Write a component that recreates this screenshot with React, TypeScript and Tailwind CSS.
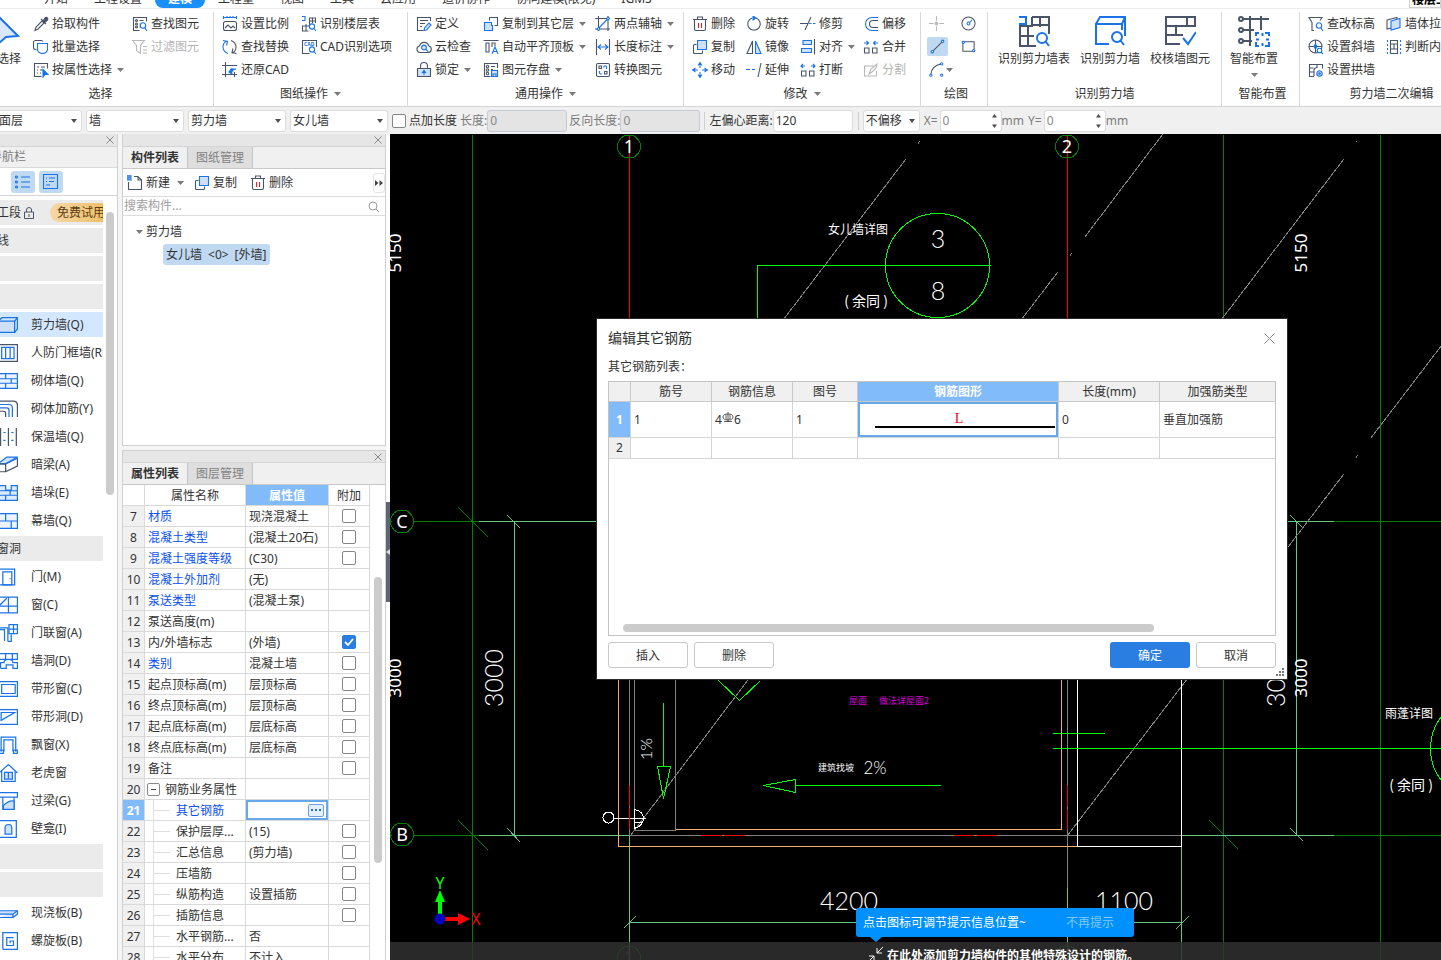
import { useState } from "react";
import type { ReactNode } from "react";

const INK = "#4a5468";
const BLUE = "#1a73e8";
const SOFT = "#cfe1fa";
const RED = "#e02020";
const FADED = "#b8b8b8";

// [path, stroke, fill]
type Stroke = [string, string?, string?];

const dot = (x: number, y: number, r: number) =>
  `M${x - r} ${y}a${r} ${r} 0 1 0 ${2 * r} 0a${r} ${r} 0 1 0 ${-2 * r} 0`;
const box = (x: number, y: number, w: number, h: number) => `M${x} ${y}h${w}v${h}h${-w}z`;

const icons: Record<string, Stroke[]> = {
  picker: [["M2 14.5l1-3.5 6-6 2 2-6 6z"], ["M8 3l5 5M10 5l2-3a1.5 1.5 0 0 1 2.500 2L11 7z", INK, INK]],
  batch: [["M3.500 10.500h-1a2 2 0 0 1-2-2v-5a2 2 0 0 1 2-2h6a2 2 0 0 1 1.500 1"], ["M4.500 4.500h10v6a4 4 0 0 1-3 3.500q-2 1-4 0a4 4 0 0 1-3-3.500z", BLUE, "#fff"]],
  attr: [["M14.500 6.500v-5h-13v13h7M4 5h2M8 5h4M4 8h1M7 8h3M4 11h1M7 11h1"], ["M10 7.500l5 5h-3l-2 2.500z", BLUE, BLUE]],
  find: [["M14.500 5.500v-4h-13v13h6M7.500 4.500h4M7.500 8h1M7.500 11h1"], [dot(4.5, 4.5, 1)], [dot(4.5, 8, 1)], [dot(4.5, 11, 1)], [dot(11, 9.5, 2.7) + "M13 12l2 3", BLUE]],
  filter: [["M.5 1.500h12l-4 5v8l-4-3v-5zM11 7.500h4M11 11h4M11 14h4", FADED]],
  scale: [["M1.500 7.500a2 2 0 0 1 2-2h9a2 2 0 0 1 2 2v5a2 2 0 0 1-2 2h-9a2 2 0 0 1-2-2zM3 12l3-3 3 3 2-2 2 2"], ["M1 1.500h14M1.500 0v3M5 0v2M8 0v2M11 0v2M14.500 0v3", BLUE]],
  swap: [["M9 1.500q5 2 5 6.500t-4 6M14.500 14.500l-4.500-1 1-4"], ["M6 14.500q-5-2-5-6.500t4-6M1 1.500l4.500 1-1 4", BLUE]],
  restore: [["M3.500 0v15M0 3.500h15M12.500 10v5M0 12.500h15"], ["M7 10l4-1-1-2 4 0M9 7l-2 3 3 2z", BLUE, BLUE]],
  floors: [["M8.500 6v-4h6v5M11.500 2v5M8 5h6.500M8.500 5v5h-7v5h6M5 8v7M1.500 10.500v4"], ["M1 .5h3v4h-3" + dot(11, 10.5, 2.6) + "M13 12.500l2 2.500", BLUE]],
  cad: [["M15.500 8v-6.500h-14v13h7"], [dot(11, 10.5, 2.6) + "M13 12.500l2 2.500", BLUE]],
  define: [["M14.500 5v-3.500h-13v13h6M4 4.500h8M4 7.500h5M4 10.500h2"], ["M8 14.500l.5-2.500 4.500-5 2 2-4.500 5z", BLUE, SOFT]],
  cloud: [["M4 13.500a3.300 3.300 0 0 1-.5-6.500a4.800 4.800 0 0 1 9.300 0a3.300 3.300 0 0 1-.8 6.500z"], [dot(8, 8.5, 2.4) + "M10 10.500l2 2", BLUE, SOFT]],
  lock: [["M4.500 6v-2a3.500 3.500 0 0 1 7 0v2"], [box(1.5, 6.5, 13, 8), INK, SOFT], ["M8 13v-3M6.500 10.500l1.500-2 1.500 2z", BLUE, BLUE]],
  copyTo: [["M6.500 1.500h8v8h-3M6.500 1.500v3"], ["M1.500 6.500h7v3h1v5h-8z", BLUE, SOFT]],
  alignTop: [["M.5 1.500h15M3 4v9h3v-9zM9 8v-4h3v3"], ["M9 15l3-7 3 7M10 12.500h4", BLUE]],
  save: [["M14.500 6v-4.500h-13v13h6M8 4.500h4M8 7.500h2"], [dot(4.5, 4.5, 1.2)], [dot(4.5, 8, 1.2)], [dot(4.5, 11.5, 1.2)], ["M8.500 8.500h6v6h-6zM10 14v-2h3v2", BLUE, SOFT]],
  twoPoint: [["M3.500 0v15M13 0v15M0 2.500h15M0 13h15"], ["M3 13L13 2.500", BLUE], [dot(3.5, 13, 1.2), BLUE, "#fff"], [dot(13, 2.5, 1.2), BLUE, "#fff"]],
  length: [["M1.500 0v16M14.500 0v16"], ["M3 8h10M6 5.500l-3 2.500 3 2.500M10 5.500l3 2.500-3 2.500", BLUE]],
  convert: [["M3 1.500h10q1.500 0 1.500 1.500v10q0 1.500-1.500 1.500H3q-1.500 0-1.500-1.500V3q0-1.500 1.500-1.500z"], [box(4, 4, 2.5, 2.5)], [box(9.5, 9.5, 2.5, 2.5)], ["M8.500 5.500q0-1.500 1.500-1.500h1.500M4.500 9v1.500q0 1.500 1.500 1.500h1M11.500 4v3M4.500 9v2", BLUE]],
  trash: [["M1 3.500h14M5.500 3v-2h5v2M2.500 4v9q0 1.500 1.500 1.500h8q1.500 0 1.500-1.500v-9"], ["M6.500 7v5M9.500 7v5", RED]],
  copy: [["M4.500 5.500h-2q-1 0-1 1v7q0 1 1 1h7q1 0 1-1v-2"], [box(5.5, 1.5, 9, 9), BLUE, SOFT]],
  move: [["M8 4v2M8 10v2M4 8h2M10 8h2", BLUE], ["M8 .5L6.500 3h3zM8 15.500L6.500 13h3zM.5 8L3 6.500v3zM15.500 8L13 6.500v3z", BLUE, BLUE]],
  rotate: [["M10 2a6.300 6.300 0 1 1-4 0"], ["M7 0l3 2-3 2z", BLUE, BLUE]],
  mirror: [["M6.500 2v12.500h-5.500z"], ["M9.500 2v12.500h5.500z", BLUE, SOFT]],
  extend: [["M0 7.500h4M6 7.500h3", BLUE], ["M15 1l-3 14"]],
  trim: [["M0 7.500h8M11 1L5 14"], ["M9 7.500h2.500M13 7.500h2.500", BLUE]],
  align: [["M14.500 0v15.500"], [box(3, 1.5, 8.500, 4), BLUE, SOFT], [box(1.5, 9.5, 10, 4), BLUE, SOFT]],
  breakUp: [[box(1.5, 9, 4.5, 5)], [box(9.5, 9, 4.5, 5)], ["M1 4h4M3 2L1 4l2 2M11 4h4M13 2l2 2-2 2", BLUE]],
  offset: [["M15 11.500h-5a3.500 3.500 0 0 1 0-7h5"], ["M15 14.500h-6a6.500 6.500 0 0 1 0-13h6", BLUE]],
  merge: [[box(1.5, 9, 4.5, 5)], [box(9.5, 9, 4.5, 5)], ["M1 4h4M3.500 2l2 2-2 2M15 4h-4M12.500 2l-2 2 2 2", BLUE]],
  split: [["M11 4h-9.500v10h12v-5M6 12l2-5 6-5-1 4-4 4z", FADED]],
  point: [["M8 0v5M8 11v5M0 8h5M11 8h5" + dot(8, 8, 1.5), FADED, FADED]],
  gauge: [[dot(8, 8, 7)], ["M9 7l3-3" + dot(8, 8, 1.5), BLUE]],
  line: [["M2 14L14 2"], [dot(2.5, 13.5, 1.3) + dot(13.5, 2.5, 1.3), BLUE, "#fff"]],
  rect: [[box(2, 3, 12, 10)], [dot(2.5, 3.5, 1.2) + dot(13.5, 12.5, 1.2), BLUE, "#fff"]],
  arc: [["M2 13q1-9 11-11"], [dot(2, 14, 1.2) + dot(13.5, 2, 1.2) + dot(13.5, 14, 1.2), BLUE, "#fff"]],
  elevation: [["M6 14.500h-2v-8l-3-5h13l-2 3"], [dot(11, 9.5, 2.7) + "M13 12l2 3", BLUE]],
  slant: [[dot(7.5, 7.5, 6.5)], ["M7.500 1v13M1 7.500h13"], ["M7.500 5l1.500 2.500-1.500 2.500-1.500-2.500z", BLUE, BLUE], [dot(11.5, 11.5, 2.3) + "M13 13l2 2", BLUE, "#fff"]],
  arch: [["M6 14.500h-4.500v-12h13v4M6 14v-6q0-2 3-2.500M1.500 6h4M1.500 10h4M9 2v4"], [dot(11.5, 11.5, 2.7) + dot(11.5, 11.5, .8), BLUE, SOFT]],
  stretch: [["M1 4l10-2.500v9L1 13z"], ["M5 5l9-2.500v9L5 14z", BLUE, SOFT]],
  judge: [["M4.500 1v14M11.500 1v14M4.500 1.500h7M4.500 5h7M4.500 10h7M4.500 14.500h7M8 5v5"], ["M1.500 1v2M1.500 5v2M1.500 9v2M1.500 13v2M14.500 1v2M14.500 5v2M14.500 9v2M14.500 13v2", BLUE]],
  create: [["M7 1.500h4l3.500 3.500v9.500h-13V7M11 1.500v3.500h3.500"], ["M0 1h5M0 3h5M0 5h5M1 0v5M3 0v5", BLUE]],
  wall: [[box(-2, 4.5, 15, 10), BLUE, SOFT], ["M-2 4.500l4-3h13.500v10l-2.500 3M13 4.500l2.500-3", BLUE]],
  guard: [[box(-2, .5, 17.5, 15)], ["M1.500 3h11v10h-11zM5 3v10M9 3v10", BLUE]],
  brick: [["M-2 1.500h17.500v13h-17.500M-2 6h17.500M-2 10h17.500M5 1.500v4.500M10 6v4M5 10v4.500", BLUE, "#eaf3ff"]],
  rebar: [["M-1 4h9q3 0 3 3v8M-1 7h7q2 0 2 2v6", BLUE], ["M-1 1h13q3.500 0 3.500 4v10M-1 10h4q2 0 2 2v3"]],
  thermal: [["M.5 0v16M7.500 0v16M14.500 0v16"], ["M3 4h2M3 11h2M10 4h2M10 11h2", BLUE]],
  beam: [["M-2 7L6 1h9.500L5 7z", BLUE, SOFT], ["M-2 7h7v7h-7M5 14l10.500-5V2"], ["M5 7L15.500 2", BLUE]],
  pier: [["M-2 1.500h7v4h5v-4h5.500v13h-17.500M-2 6h17.500M-2 10h17.500M5 10v4.500M9 6v4", BLUE, "#dcebff"]],
  curtain: [["M-2 1.500h17.500v13h-17.500M-2 8h17.500M5 1.500v6.500M10 8v6.500", BLUE, "#eaf3ff"]],
  door: [[box(-1, 1, 14, 14), BLUE], [box(2.5, 3.5, 8, 11.5), BLUE], ["M9 9v1", BLUE]],
  window: [["M-2 1h17.500v14h-17.500M7.500 1v14M-2 9h17.500M0 8l6-6", BLUE]],
  doorWindow: [["M7 15.500v-12h-9M7 15.500h3V9M-2 15.500V5h6v10", BLUE], ["M8 .5h7.500v8h-7.500zM12 .5v8M8 4.500h8", BLUE]],
  hole: [["M-2 1.500h17.500v5h-17.500M5 1.500v5M11 1.500v5M.5 14.500v-5h3q0-3 4-3t4 3h4v5h-4v-3h-6v3h-5", BLUE]],
  strip: [[box(-2, 1.5, 17.5, 13), BLUE], [box(1.5, 4, 12, 8), BLUE]],
  stripHole: [[box(-2, 1.5, 17.5, 13), BLUE], ["M1 4h12L1 11z", BLUE]],
  bay: [["M1 14V1h13V14M3.500 14V3.500h8v10.500M-1 12.500h4v3h-4M12 12.500h3.500v3h-3.500z", BLUE]],
  dormer: [["M-1 8l8.500-7.500 8 7.500M1.500 6v9.500h12V6", BLUE], [box(4, 7.500, 7, 6), BLUE, SOFT], ["M7.500 8v5", BLUE]],
  lintel: [["M-2 .5h17.500v4h-17.500M2.500 4.500v11h10V4.500", BLUE], ["M3 15.500V12q5-5 9.500-4v7.500z", BLUE, SOFT]],
  niche: [["M-1 .5h15.500v15h-15.500", BLUE], ["M4.500 12.500V7q0-3 3-3t3 3v5.500z", BLUE, SOFT]],
  slab: [["M-2 6h17.500l-4 3h-13.500M11.500 9v3h-13.500M15.500 6v3l-4 3", BLUE, SOFT]],
  spiral: [["M2.500 15.500h13V.5h-13v9M2.500 9v6.500M12 5H6v7h6V8H9v2", BLUE]],
  list: [["M6 3h9M6 8h9M6 13h9" + dot(1.5, 3, 1) + dot(1.5, 8, 1) + dot(1.5, 13, 1), BLUE]],
  card: [[box(.5, .5, 14, 14), BLUE], ["M3 4h1M6 4h6M3 7.500h1M6 7.500h5M3 11h4", BLUE]],
};

const bigIcons: Record<string, Stroke[]> = {
  cursor: [["M5 1L25 21 13 22 5 29z", BLUE, "#dbe8fb"]],
  tableScan: [["M14 10h18M14 2h17v17M22 2v10M14 2v9H2v20h16M10 10v21M2 21h14"], ["M1 2h7v7H1" + dot(24, 23, 5) + "M28 27l3 4", BLUE]],
  wallScan: [["M15 29H2V9h26v6M2 9l4-7h25v19M28 9l3-7", BLUE], [dot(23, 22, 5) + "M27 26l3 4", BLUE]],
  verify: [["M16 29H2V2h29v9H2M2 20h17M23 2v9M12 11v9"], ["M19 23l5 6 8-12", BLUE]],
  smart: [["M5 4h26M5 15h11M5 26h9M12 1v30M23 1v14"], [dot(3, 4, 2)], [dot(3, 15, 2)], [dot(3, 26, 2)], ["M18 21v-3h3M27 18h4v3M31 27v4h-4M21 31h-3v-4M24.500 18v3M24.500 28v3M18 24.500h3M28 24.500h3", BLUE]],
};

function Icon({ name, size = "size-4" }: { name: string; size?: string }) {
  const big = name in bigIcons;
  const strokes = big ? bigIcons[name] : icons[name];
  return (
    <svg
      viewBox={big ? "0 0 32 32" : "0 0 16 16"}
      className={big ? "size-8 shrink-0" : `${size} shrink-0`}
      strokeWidth={big ? 2 : 1.1}
      aria-hidden="true"
    >
      {strokes.map(([d, stroke = INK, fill = "none"], i) => (
        <path key={i} d={d} stroke={stroke} fill={fill} />
      ))}
      {name === "cad" && (
        <text x="3" y="7" fontSize="5" fontWeight="700" fill={BLUE}>CAD</text>
      )}
    </svg>
  );
}

function Caret({ className = "" }: { className?: string }) {
  return (
    <svg viewBox="0 0 7 4" className={`h-1 w-[7px] shrink-0 ${className}`} aria-hidden="true">
      <path d="M0 0h7L3.500 4z" fill="#7a7a7a" />
    </svg>
  );
}

function CloseIcon() {
  return (
    <svg viewBox="0 0 8 8" className="size-2" aria-hidden="true">
      <path d="M.5.5l7 7M7.500.5l-7 7" stroke="#8a8a8a" />
    </svg>
  );
}

interface Tool {
  icon: string;
  label: string;
  menu?: boolean;
  off?: boolean;
}

function Tools({ items, className }: { items: Tool[]; className: string }) {
  return (
    <div className={`flex shrink-0 flex-col ${className}`}>
      {items.map((t) => (
        <button
          key={t.label}
          disabled={t.off}
          className="flex h-[23px] items-center gap-[3px] whitespace-nowrap disabled:text-[#b4b4b4]"
        >
          <Icon name={t.icon} />
          {t.label}
          {t.menu && <Caret className="ml-0.5" />}
        </button>
      ))}
    </div>
  );
}

function BigTool({ icon, label, menu }: { icon: string; label: string; menu?: boolean }) {
  return (
    <button className="flex shrink-0 flex-col items-center whitespace-nowrap pt-[3px]">
      <Icon name={icon} />
      <span className="mt-1 leading-4">{label}</span>
      {menu && <Caret className="mt-1.5" />}
    </button>
  );
}

function Group({ title, menu, className, children }: { title: string; menu?: boolean; className: string; children: ReactNode }) {
  return (
    <section className={`flex shrink-0 flex-col border-r border-[#d9d9d9] ${className}`}>
      <div className="flex h-[72px] pl-2">{children}</div>
      <h2 className={`flex items-center justify-center gap-1.5 whitespace-nowrap ${menu ? "h-5" : "h-6"}`}>
        {title}
        {menu && <Caret />}
      </h2>
    </section>
  );
}

const menuTabs = ["开始", "工程设置", "建模", "工程量", "视图", "工具", "云应用", "造价协作", "协同建模(限免)", "IGMS"];

function MenuTabs() {
  return (
    <nav className="flex h-[9px] shrink-0 items-end overflow-hidden border-b border-[#ececec] bg-white pl-[31px]">
      {menuTabs.map((t) => (
        <button
          key={t}
          className={
            t === "建模"
              ? "h-6 shrink-0 rounded-lg bg-[#1890ff] px-[13px] pt-1.5 leading-[18px] font-bold text-white"
              : "h-6 shrink-0 px-[13px] pt-1.5 leading-[18px]"
          }
        >
          {t}
        </button>
      ))}
      <button className="ml-auto h-6 w-8 shrink-0 overflow-hidden border border-[#d0d0d0] pt-1.5 pl-0.5 text-left leading-[18px] font-bold whitespace-nowrap text-black">
        楼层工
      </button>
    </nav>
  );
}

function Ribbon() {
  return (
    <div className="flex h-[98px] shrink-0 overflow-hidden border-b border-[#d4d4d4] bg-white pt-[3px]">
      <Group title="选择" className="w-[214px] [&>h2]:pr-3">
        <div className="-ml-[15px] w-10 shrink-0">
          <BigTool icon="cursor" label="选择" />
        </div>
        <Tools
          className="w-[99px]"
          items={[
            { icon: "picker", label: "拾取构件" },
            { icon: "batch", label: "批量选择" },
            { icon: "attr", label: "按属性选择", menu: true },
          ]}
        />
        <Tools className="w-20" items={[{ icon: "find", label: "查找图元" }, { icon: "filter", label: "过滤图元", off: true }]} />
      </Group>
      <Group title="图纸操作" menu className="w-[194px]">
        <Tools
          className="w-[79px]"
          items={[
            { icon: "scale", label: "设置比例" },
            { icon: "swap", label: "查找替换" },
            { icon: "restore", label: "还原CAD" },
          ]}
        />
        <Tools className="w-24" items={[{ icon: "floors", label: "识别楼层表" }, { icon: "cad", label: "CAD识别选项" }]} />
      </Group>
      <Group title="通用操作" menu className="w-[276px]">
        <Tools
          className="w-[67px]"
          items={[
            { icon: "define", label: "定义" },
            { icon: "cloud", label: "云检查" },
            { icon: "lock", label: "锁定", menu: true },
          ]}
        />
        <Tools
          className="w-28"
          items={[
            { icon: "copyTo", label: "复制到其它层", menu: true },
            { icon: "alignTop", label: "自动平齐顶板", menu: true },
            { icon: "save", label: "图元存盘", menu: true },
          ]}
        />
        <Tools
          className="w-20"
          items={[
            { icon: "twoPoint", label: "两点辅轴", menu: true },
            { icon: "length", label: "长度标注", menu: true },
            { icon: "convert", label: "转换图元" },
          ]}
        />
      </Group>
      <Group title="修改" menu className="w-[237px]">
        <Tools
          className="w-[54px]"
          items={[
            { icon: "trash", label: "删除" },
            { icon: "copy", label: "复制" },
            { icon: "move", label: "移动" },
          ]}
        />
        <Tools
          className="w-[54px]"
          items={[
            { icon: "rotate", label: "旋转" },
            { icon: "mirror", label: "镜像" },
            { icon: "extend", label: "延伸" },
          ]}
        />
        <Tools
          className="w-[63px]"
          items={[
            { icon: "trim", label: "修剪" },
            { icon: "align", label: "对齐", menu: true },
            { icon: "breakUp", label: "打断" },
          ]}
        />
        <Tools
          className="w-12"
          items={[
            { icon: "offset", label: "偏移" },
            { icon: "merge", label: "合并" },
            { icon: "split", label: "分割", off: true },
          ]}
        />
      </Group>
      <Group title="绘图" className="w-[67px] [&>h2]:pl-1">
        <div className="-ml-0.5 grid auto-rows-[23px] grid-cols-[32px_22px] items-center">
          {["point", "gauge", "line", "rect", "arc"].map((name) => (
            <button
              key={name}
              aria-label={name}
              className={
                name === "line"
                  ? "flex h-[19px] w-[21px] items-center justify-center rounded-xs bg-[#bfd9f2]"
                  : "flex h-[19px] items-center gap-0.5 px-0.5"
              }
            >
              <Icon name={name} size="size-[15px]" />
              {name === "arc" && <Caret />}
            </button>
          ))}
        </div>
      </Group>
      <Group title="识别剪力墙" className="w-[234px]">
        <div className="flex gap-[10px] pl-0.5">
          <BigTool icon="tableScan" label="识别剪力墙表" />
          <BigTool icon="wallScan" label="识别剪力墙" />
          <BigTool icon="verify" label="校核墙图元" />
        </div>
      </Group>
      <Group title="智能布置" className="w-[78px] [&>h2]:pl-1">
        <BigTool icon="smart" label="智能布置" menu />
      </Group>
      <Group title="剪力墙二次编辑" className="w-[184px]">
        <Tools
          className="w-[78px]"
          items={[
            { icon: "elevation", label: "查改标高" },
            { icon: "slant", label: "设置斜墙" },
            { icon: "arch", label: "设置拱墙" },
          ]}
        />
        <Tools className="w-24" items={[{ icon: "stretch", label: "墙体拉伸" }, { icon: "judge", label: "判断内外墙" }]} />
      </Group>
    </div>
  );
}

function Picker({ label, value, className }: { label: string; value: string; className: string }) {
  return (
    <span className={`grid h-[22px] shrink-0 items-center rounded-[3px] border border-[#dcdcdc] bg-white ${className}`}>
      <select aria-label={label} defaultValue={value} className="col-start-1 row-start-1 w-full appearance-none pl-0.5 outline-none">
        <option>{value}</option>
      </select>
      <svg viewBox="0 0 6 4" className="pointer-events-none col-start-1 row-start-1 mr-1 h-1 w-1.5 justify-self-end" aria-hidden="true">
        <path d="M0 0h6L3 4z" fill="#4d4d4d" />
      </svg>
    </span>
  );
}

function Spin({ label }: { label: string }) {
  return (
    <>
      <label htmlFor={`offset-${label}`} className="shrink-0 pl-1 text-[#7c7c7c]">{label}=</label>
      <span className="ml-0.5 flex h-[22px] w-[62px] shrink-0 items-center rounded-[3px] border border-[#dcdcdc] bg-white pr-1">
        <input id={`offset-${label}`} defaultValue="0" className="w-full min-w-0 px-0.5 text-[#8a8a8a] outline-none" />
        <svg viewBox="0 0 5 14" className="h-3.5 w-[5px] shrink-0" aria-hidden="true">
          <path d="M0 3.500h5L2.500 0zM0 10.500h5L2.500 14z" fill="#4d4d4d" />
        </svg>
      </span>
      <span className="shrink-0 text-[#7c7c7c]">mm</span>
    </>
  );
}

function OptionsBar() {
  return (
    <div className="flex h-[27px] shrink-0 items-center overflow-hidden bg-[#f0f0f0] whitespace-nowrap">
      <div className="flex gap-1">
        <Picker label="楼层" value="面层" className="-ml-1 w-[86px]" />
        <Picker label="构件大类" value="墙" className="w-[98px]" />
        <Picker label="构件类型" value="剪力墙" className="w-[98px]" />
        <Picker label="构件" value="女儿墙" className="w-[98px]" />
      </div>
      <label className="ml-1 flex shrink-0 items-center gap-[3px]">
        <Check />
        点加长度
      </label>
      <label htmlFor="len" className="ml-[3px] shrink-0 text-[#7c7c7c]">长度:</label>
      <input id="len" disabled defaultValue="0" className="h-[22px] w-20 shrink-0 rounded-[3px] border border-[#c5cad6] bg-[#e4e4e4] px-0.5 text-[#8a8a8a]" />
      <label htmlFor="backLen" className="ml-[2px] shrink-0 text-[#7c7c7c]">反向长度:</label>
      <input id="backLen" disabled defaultValue="0" className="h-[22px] w-20 shrink-0 rounded-[3px] border border-[#c5cad6] bg-[#e4e4e4] px-0.5 text-[#8a8a8a]" />
      <span className="ml-1 h-[18px] border-l border-[#cfcfcf] pl-1" />
      <label htmlFor="shift" className="shrink-0">左偏心距离:</label>
      <input id="shift" defaultValue="120" className="h-[22px] w-20 shrink-0 rounded-[3px] border border-[#dcdcdc] bg-white px-0.5" />
      <span className="ml-[5px] h-[18px] border-l border-[#cfcfcf] pl-1" />
      <Picker label="偏移方式" value="不偏移" className="w-[57px]" />
      <Spin label="X" />
      <Spin label="Y" />
    </div>
  );
}

function Check({ checked = false, label }: { checked?: boolean; label?: string }) {
  return (
    <span className="inline-grid size-3.5 shrink-0">
      <input
        type="checkbox"
        defaultChecked={checked}
        aria-label={label}
        className="peer col-start-1 row-start-1 size-3.5 appearance-none rounded-[2px] border border-[#858585] bg-white checked:border-[#2a7de1] checked:bg-[#2a7de1]"
      />
      <svg viewBox="0 0 14 14" className="pointer-events-none invisible col-start-1 row-start-1 size-3.5 peer-checked:visible" aria-hidden="true">
        <path d="M3 7l3 3 5-6" stroke="#fff" strokeWidth="1.800" fill="none" />
      </svg>
    </span>
  );
}

function Strip({ className = "h-[13px]" }: { className?: string }) {
  return (
    <div className={`flex shrink-0 items-center justify-end border-b border-[#d4d4d4] bg-[#e6e6e6] pr-[3px] ${className}`}>
      <button aria-label="关闭"><CloseIcon /></button>
    </div>
  );
}

// an entry without an icon is a section bar
const navRows: { label: string; icon?: string }[] = [
  { label: "轴线" },
  { label: "" },
  { label: "" },
  { label: "剪力墙(Q)", icon: "wall" },
  { label: "人防门框墙(RF)", icon: "guard" },
  { label: "砌体墙(Q)", icon: "brick" },
  { label: "砌体加筋(Y)", icon: "rebar" },
  { label: "保温墙(Q)", icon: "thermal" },
  { label: "暗梁(A)", icon: "beam" },
  { label: "墙垛(E)", icon: "pier" },
  { label: "幕墙(Q)", icon: "curtain" },
  { label: "门窗洞" },
  { label: "门(M)", icon: "door" },
  { label: "窗(C)", icon: "window" },
  { label: "门联窗(A)", icon: "doorWindow" },
  { label: "墙洞(D)", icon: "hole" },
  { label: "带形窗(C)", icon: "strip" },
  { label: "带形洞(D)", icon: "stripHole" },
  { label: "飘窗(X)", icon: "bay" },
  { label: "老虎窗", icon: "dormer" },
  { label: "过梁(G)", icon: "lintel" },
  { label: "壁龛(I)", icon: "niche" },
  { label: "" },
  { label: "" },
  { label: "现浇板(B)", icon: "slab" },
  { label: "螺旋板(B)", icon: "spiral" },
  { label: "坡道(PD)", icon: "door" },
];

function NavPanel() {
  return (
    <aside className="flex w-[118px] shrink-0 flex-col overflow-hidden border-r border-[#cfcfcf] bg-white">
      <Strip />
      <h2 className="flex h-[21px] shrink-0 items-center border-b border-[#d9d9d9] bg-[#f0f0f0] text-[#7c7c7c]">
        <span className="flex w-[26px] justify-end whitespace-nowrap">导航栏</span>
      </h2>
      <div className="flex h-7 shrink-0 items-center gap-1 border-b border-[#d4d4d4] pl-[11px]">
        <button aria-label="列表" className="flex h-[22px] w-6 items-center justify-center rounded-[3px] bg-[#bfd9f2]"><Icon name="list" /></button>
        <button aria-label="详情" className="flex h-[22px] w-6 items-center justify-center rounded-[3px] bg-[#bfd9f2]"><Icon name="card" /></button>
      </div>
      <div className="flex min-h-0 flex-1 gap-[3px] overflow-hidden pt-1">
        <ul className="flex w-[103px] shrink-0 flex-col gap-[3px] overflow-hidden">
          <li className="flex h-[25px] shrink-0 items-center bg-[#ebebeb]">
            <span className="flex w-[21px] shrink-0 justify-end whitespace-nowrap">施工段</span>
            <svg viewBox="0 0 10 12" className="ml-[3px] h-3 w-2.5 shrink-0" aria-hidden="true">
              <path d="M2.500 5V3a2.500 2.500 0 0 1 5 0v2M.5 5h9v6.500h-9zM5 7v3" stroke={INK} fill="none" />
            </svg>
            <span className="ml-4 flex h-[19px] w-[53px] shrink-0 items-center overflow-hidden rounded-l-full bg-gradient-to-r from-[#f6d7a4] to-[#efc06a] pl-[7px] whitespace-nowrap text-[#5c3a12]">
              免费试用
            </span>
          </li>
          {navRows.map((row, i) =>
            row.icon ? (
              <li key={i} className={row.label === "剪力墙(Q)" ? "h-[25px] shrink-0 bg-[#d3e8ff]" : "h-[25px] shrink-0"}>
                <button className="flex h-full w-full items-center gap-[13px] overflow-hidden text-left whitespace-nowrap">
                  <Icon name={row.icon} size="size-[18px]" />
                  {row.label}
                </button>
              </li>
            ) : (
              <li key={i} className="flex h-[25px] shrink-0 items-center bg-[#ebebeb]">
                <span className={row.label === "轴线" ? "flex w-[9px] justify-end whitespace-nowrap" : "flex w-[21px] justify-end whitespace-nowrap"}>
                  {row.label}
                </span>
              </li>
            )
          )}
        </ul>
        <div className="mt-3 h-[283px] w-2 rounded-full bg-[#cbcbcb]" />
      </div>
    </aside>
  );
}

function PanelTabs({ tabs }: { tabs: [string, string] }) {
  const [active, setActive] = useState(0);
  return (
    <div role="tablist" className="flex h-[22px] shrink-0 border-b border-[#c9c9c9] bg-[#f0f0f0]">
      {tabs.map((t, i) => (
        <button
          key={t}
          role="tab"
          aria-selected={i === active}
          onClick={() => setActive(i)}
          className={
            i === active
              ? "w-[65px] border-r border-[#c0c4cc] bg-[#f0f0f0] font-bold"
              : "w-[65px] border-r border-[#c0c4cc] bg-[#dedede] text-[#828282]"
          }
        >
          {t}
        </button>
      ))}
    </div>
  );
}

function ComponentPanel() {
  return (
    <section className="flex h-[312px] shrink-0 flex-col border border-t-0 border-[#cfcfcf] bg-white">
      <Strip />
      <PanelTabs tabs={["构件列表", "图纸管理"]} />
      <div className="flex h-7 shrink-0 items-center border-b border-[#dcdcdc] pl-1">
        <button className="flex w-[67px] items-center gap-[3px]">
          <Icon name="create" />新建<Caret className="ml-1" />
        </button>
        <button className="flex w-14 items-center gap-[3px]"><Icon name="copy" />复制</button>
        <button className="flex items-center gap-[3px]"><Icon name="trash" />删除</button>
        <button aria-label="更多" className="ml-auto flex h-5 w-3 items-center justify-center rounded-[3px] border border-[#e4e4e4]">
          <svg viewBox="0 0 8 6" className="h-1.5 w-2 shrink-0"><path d="M0 0l3.500 3L0 6zM4.500 0L8 3 4.500 6z" fill="#444" /></svg>
        </button>
      </div>
      <div className="flex h-[19px] shrink-0 items-center border-b border-[#dcdcdc] pr-1.5 pl-px">
        <input aria-label="搜索构件" placeholder="搜索构件..." className="w-full outline-none placeholder:text-[#a0a0a0]" />
        <svg viewBox="0 0 11 11" className="size-[11px] shrink-0" aria-hidden="true">
          <path d={dot(5, 5, 4) + "M8 8l3 3"} stroke="#9a9a9a" fill="none" />
        </svg>
      </div>
      <ul className="pt-1 pl-[13px]">
        <li>
          <button className="flex h-6 items-center gap-[3px]"><Caret />剪力墙</button>
          <ul className="pl-[27px]">
            <li>
              <button className="flex h-[21px] items-center gap-1.5 rounded-[3px] bg-[#bfd9f2] px-[3px]">
                <span>女儿墙</span>
                <span>&lt;0&gt;</span>
                <span>[外墙]</span>
              </button>
            </li>
          </ul>
        </li>
      </ul>
    </section>
  );
}

interface Prop {
  no: number;
  name: string;
  value?: string;
  link?: boolean;
  child?: boolean;
  check?: boolean;
}

const props: Prop[] = [
  { no: 7, name: "材质", value: "现浇混凝土", link: true, check: false },
  { no: 8, name: "混凝土类型", value: "(混凝土20石)", link: true, check: false },
  { no: 9, name: "混凝土强度等级", value: "(C30)", link: true, check: false },
  { no: 10, name: "混凝土外加剂", value: "(无)", link: true },
  { no: 11, name: "泵送类型", value: "(混凝土泵)", link: true },
  { no: 12, name: "泵送高度(m)" },
  { no: 13, name: "内/外墙标志", value: "(外墙)", check: true },
  { no: 14, name: "类别", value: "混凝土墙", link: true, check: false },
  { no: 15, name: "起点顶标高(m)", value: "层顶标高", check: false },
  { no: 16, name: "终点顶标高(m)", value: "层顶标高", check: false },
  { no: 17, name: "起点底标高(m)", value: "层底标高", check: false },
  { no: 18, name: "终点底标高(m)", value: "层底标高", check: false },
  { no: 19, name: "备注", check: false },
  { no: 20, name: "钢筋业务属性" },
  { no: 21, name: "其它钢筋", link: true, child: true },
  { no: 22, name: "保护层厚...", value: "(15)", child: true, check: false },
  { no: 23, name: "汇总信息", value: "(剪力墙)", child: true, check: false },
  { no: 24, name: "压墙筋", child: true, check: false },
  { no: 25, name: "纵筋构造", value: "设置插筋", child: true, check: false },
  { no: 26, name: "插筋信息", child: true, check: false },
  { no: 27, name: "水平钢筋...", value: "否", child: true },
  { no: 28, name: "水平分布", value: "不计入", child: true },
];

function PropName({ row }: { row: Prop }) {
  if (row.no === 20) {
    return (
      <span className="flex items-center gap-[5px] pl-[2px]">
        <button aria-label="收起" className="flex size-[13px] items-center justify-center rounded-[2px] border border-[#8a8a8a] leading-none">
          <span className="h-px w-[5px] bg-[#444]" />
        </button>
        <span className="pt-0.5">{row.name}</span>
      </span>
    );
  }
  if (row.child) {
    return (
      <span className="flex h-5 items-center pl-2">
        <span className="flex h-full w-[23px] items-center border-l border-[#dedede]">
          <span className="h-px w-4 bg-[#dedede]" />
        </span>
        <span className="pt-0.5">{row.name}</span>
      </span>
    );
  }
  return <div className="pt-0.5 pl-[3px]">{row.name}</div>;
}

function PropertyPanel() {
  return (
    <section className="mt-1 flex min-h-0 flex-1 flex-col overflow-hidden border border-b-0 border-[#cfcfcf] bg-white">
      <Strip className="h-3" />
      <PanelTabs tabs={["属性列表", "图层管理"]} />
      <div className="flex min-h-0 flex-1 gap-1 overflow-hidden">
        <div className="shrink-0 overflow-hidden">
          <table className="w-[247px] table-fixed border-separate border-spacing-0 whitespace-nowrap">
            <colgroup>
              <col className="w-[22px]" />
              <col className="w-[101px]" />
              <col className="w-[83px]" />
              <col className="w-[41px]" />
            </colgroup>
            <thead>
              <tr className="h-[21px] [&>th]:border-r [&>th]:border-b [&>th]:border-[#d9d9d9] [&>th]:p-0 [&>th]:font-normal">
                <th />
                <th><div className="pt-0.5 leading-4">属性名称</div></th>
                <th className="bg-[#82bbfa] text-white"><div className="pt-0.5 leading-4 font-bold">属性值</div></th>
                <th><div className="pt-0.5 leading-4">附加</div></th>
              </tr>
            </thead>
            <tbody>
              {props.map((row) => (
                <tr key={row.no} className="h-[21px] [&>td]:border-r [&>td]:border-b [&>td]:border-[#d9d9d9] [&>td]:p-0 [&>td]:leading-4">
                  <td className={row.no === 21 ? "bg-[#82bbfa] text-center font-bold text-white" : "bg-[#f0f0f0] text-center"}>
                    <div className="pt-0.5">{row.no}</div>
                  </td>
                  <td className={row.link ? "text-[#0a50f0]" : ""}><PropName row={row} /></td>
                  <td>
                    {row.no === 21 ? (
                      <div className="flex h-5 items-center justify-end border-2 border-[#66a8ea] pr-0.5">
                        <button aria-label="编辑其它钢筋" className="flex h-[13px] w-4 items-center justify-center gap-0.5 rounded-[2px] border border-[#6aa3dc] bg-[#e3effb]">
                          <i className="size-0.5 bg-[#2a6fc0]" />
                          <i className="size-0.5 bg-[#2a6fc0]" />
                          <i className="size-0.5 bg-[#2a6fc0]" />
                        </button>
                      </div>
                    ) : (
                      <div className="pt-0.5 pl-[3px]">{row.value}</div>
                    )}
                  </td>
                  <td>
                    {row.check !== undefined && (
                      <div className="flex justify-center"><Check checked={row.check} label={row.name} /></div>
                    )}
                  </td>
                </tr>
              ))}
            </tbody>
          </table>
        </div>
        <div className="mt-[92px] h-[286px] w-2 rounded-full bg-[#cbcbcb]" />
      </div>
    </section>
  );
}

const AXIS = "#008000";
const DIM = "#62c883";
const LIME = "#00ff00";
const GREY = "#808080";
const WALL = "#f5b070";

// drawing lines in model coordinates, grouped by pen
const pens: [string, string][] = [
  [AXIS, "M472 134V960M1223 134V960M1380 134V960M413 521H478M1333 521H1441M413 835H478M1333 835H1441M390 521h1M390 835h1M458 507l30 30M458 820l30 30M1209 820l29 29"],
  [DIM, "M478 521H1333M478 835H629M1181 835H1333M514 521V835M1296 521V835M507 515l13 13M507 828l13 14M1290 515l13 13M1290 828l13 13M629 835V960M1067 887V960M1181 845V960M629 922H1181M623 928l12-12M1175 929l13-13"],
  ["#ff0000", "M629 134V319M1067 134V319"],
  [GREY, "M629 679V835M1067 679V887M629 835H1181M634 679V830H675M675 679V830M905 159L783 319M919 141l-2 3M1162 134L1084 237M1071 253l-2 3M1057 272L1021 319M1356 141l1 1M1343 159L1221 319M1441 345L1370 438M1357 455l-2 3M1343 474L1067 835M747 680L630 835"],
  [WALL, "M618 679V846H1077M675 829H1061V679"],
  ["#ffffff", "M1077 679V846H1181V679M613 818H645M634 809V828Q643 825 643 818Q643 811 634 809M634 822h8"],
  ["#ff0000", "M629 784V805M629 807V828M1067 784V806M1067 808V829M700 835h21M723 835h21M953 835h20M976 835h20"],
  [LIME, "M757 319V265H990M718 680l21 20 21-20M663 702V766M657 766h13l-7 32zM795 785H940M795 779v13l-32-7zM1052 733h52M1052 748H1441"],
];

function Cad() {
  return (
    <svg viewBox="390 134 1051 826" preserveAspectRatio="xMinYMin slice" className="size-full" role="img" aria-label="图纸">
      <g transform="translate(.5 .5)" fill="none" shapeRendering="crispEdges">
        {pens.map(([color, d], i) => (
          <path key={i} d={d} stroke={color} />
        ))}
        <g stroke={AXIS}>
          <circle cx="628.500" cy="146" r="11.500" />
          <circle cx="1066.500" cy="146" r="11.500" />
          <circle cx="401.500" cy="521" r="11.500" />
          <circle cx="401.500" cy="834" r="11.500" />
          <circle cx="628.500" cy="957" r="11.500" />
          <circle cx="1066.500" cy="957" r="11.500" />
        </g>
        <circle cx="937" cy="265" r="52" stroke={LIME} />
        <circle cx="1482" cy="748" r="52" stroke={LIME} />
        <circle cx="608" cy="817" r="5.500" stroke="#fff" />
      </g>
      <g>
        <path d="M438 916v-14h-3l5-12 5 12h-3v14z" fill={LIME} />
        <path d="M443 917h15v-4l12 6-12 6v-4h-15z" fill="#f00" />
        <circle cx="440" cy="919" r="5.500" fill="#0000c0" />
      </g>
      <g textAnchor="middle" className="font-['Noto_Sans','Noto_Sans_CJK_SC',sans-serif]" fill="#fff">
        <g fontSize="18">
          <text x="629" y="153">1</text>
          <text x="1067" y="153">2</text>
          <text x="402" y="528">C</text>
          <text x="402" y="841">B</text>
          <text x="629" y="964" fill="#666">1</text>
        </g>
        <text x="440" y="889" fontSize="16" fill={LIME}>Y</text>
        <text x="476" y="925" fontSize="16" fill="#f00">X</text>
        <g fontSize="17">
          <text transform="translate(401 253) rotate(-90)">5150</text>
          <text transform="translate(1307 253) rotate(-90)">5150</text>
          <text transform="translate(401 678) rotate(-90)">3000</text>
          <text transform="translate(1307 678) rotate(-90)">3000</text>
        </g>
      </g>
      <g textAnchor="middle" fill="#fff" className="font-['Lato','Noto_Sans_CJK_SC',sans-serif] font-light">
        <g fontSize="25">
          <text x="938" y="248">3</text>
          <text x="938" y="300">8</text>
          <text x="849" y="910">4200</text>
          <text x="1124" y="910">1100</text>
          <text transform="translate(503 678) rotate(-90)">3000</text>
          <text transform="translate(1285 678) rotate(-90)">3000</text>
        </g>
        <text x="875" y="774" fontSize="17">2%</text>
        <text transform="translate(652 749) rotate(-90)" fontSize="16">1%</text>
      </g>
      <g textAnchor="middle" fill="#fff" fontSize="12" className="font-['Noto_Sans_CJK_SC',sans-serif]">
        <text x="858" y="234">女儿墙详图</text>
        <text x="866" y="306" fontSize="14">( 余同 )</text>
        <text x="1409" y="718">雨蓬详图</text>
        <text x="1411" y="790" fontSize="14">( 余同 )</text>
        <text x="836" y="771" fontSize="9">建筑找坡</text>
        <text x="858" y="704" fontSize="9" fill="#d800d8">屋面</text>
        <text x="904" y="704" fontSize="9" fill="#d800d8">做法详屋面2</text>
      </g>
    </svg>
  );
}

function DialogButton({ primary, children }: { primary?: boolean; children: ReactNode }) {
  return (
    <button
      className={
        primary
          ? "h-[26px] w-20 rounded-[3px] bg-[#2a7de1] pt-0.5 text-white"
          : "h-[26px] w-20 rounded-[3px] border border-[#c8c8c8] bg-white pt-0.5"
      }
    >
      {children}
    </button>
  );
}

function RebarDialog() {
  return (
    <div role="dialog" aria-labelledby="rebar-title" className="absolute top-[185px] left-[207px] flex h-[360px] w-[690px] flex-col bg-white px-[11px] outline outline-[#2b2b2b]">
      <div className="flex h-[38px] shrink-0 items-center justify-between pr-px">
        <h2 id="rebar-title" className="text-sm">编辑其它钢筋</h2>
        <button aria-label="关闭">
          <svg viewBox="0 0 11 11" className="size-[11px]"><path d="M.5.5l10 10M10.500.5l-10 10" stroke="#8a8a8a" /></svg>
        </button>
      </div>
      <p className="h-6 shrink-0 leading-5">其它钢筋列表：</p>
      <div className="flex h-[255px] shrink-0 flex-col border border-[#c4c4c4]">
        <table className="w-full table-fixed border-separate border-spacing-0">
          <colgroup>
            <col className="w-[22px]" />
            <col className="w-[81px]" />
            <col className="w-[81px]" />
            <col className="w-[65px]" />
            <col className="w-[201px]" />
            <col className="w-[101px]" />
            <col />
          </colgroup>
          <thead>
            <tr className="h-5 [&>th]:border-r [&>th]:border-b [&>th]:border-[#c9c9c9] [&>th]:p-0 [&>th]:pt-px [&>th]:font-normal [&>th:last-child]:border-r-0">
              <th className="bg-[#f0f0f0]" />
              <th className="bg-[#f0f0f0]">筋号</th>
              <th className="bg-[#f0f0f0]">钢筋信息</th>
              <th className="bg-[#f0f0f0]">图号</th>
              <th className="bg-[#82bbfa] text-white"><b>钢筋图形</b></th>
              <th className="bg-[#f0f0f0]">长度(mm)</th>
              <th className="bg-[#f0f0f0] pr-px">加强筋类型</th>
            </tr>
          </thead>
          <tbody className="[&_td]:border-r [&_td]:border-b [&_td]:border-[#d4d4d4] [&_td]:p-0 [&_td:last-child]:border-r-0">
            <tr className="h-9">
              <td className="bg-[#82bbfa] text-center font-bold text-white">1</td>
              <td><div className="pl-[3px]">1</div></td>
              <td>
                <div className="flex items-center pl-[3px]">
                  4
                  <svg viewBox="0 0 12 12" className="mb-1 size-3" role="img" aria-label="HRB400">
                    <path d="M6 0v10M4 2.500v5M8 2.500v5M2 9.500h8M1 5q0-3 5-3t5 3-5 3-5-3z" stroke="#333" strokeWidth=".8" fill="none" />
                  </svg>
                  6
                </div>
              </td>
              <td><div className="pl-[3px]">1</div></td>
              <td>
                <div className="flex h-[35px] flex-col items-center border-2 border-[#66a8ea] pr-px pl-[15px]">
                  <span className="mt-2 pr-3 font-['Liberation_Serif',serif] text-sm leading-[14px] text-red-600">L</span>
                  <span className="h-0.5 w-full shrink-0 bg-black" />
                </div>
              </td>
              <td><div className="pl-[3px]">0</div></td>
              <td><div className="pl-[3px]">垂直加强筋</div></td>
            </tr>
            <tr className="h-[21px]">
              <td className="bg-[#f0f0f0] text-center">2</td>
              <td /><td /><td /><td /><td /><td />
            </tr>
          </tbody>
        </table>
        <div className="mt-auto mb-[3px] ml-3.5 h-2 w-[531px] rounded-full bg-[#cbcbcb]" />
      </div>
      <div className="flex gap-1.5 pt-1.5">
        <DialogButton>插入</DialogButton>
        <DialogButton>删除</DialogButton>
        <span className="flex-1" />
        <DialogButton primary>确定</DialogButton>
        <DialogButton>取消</DialogButton>
      </div>
      <svg viewBox="0 0 8 8" className="absolute right-[3px] bottom-[3px] size-2" aria-hidden="true">
        <path d="M6 0h2v2H6zM3 3h2v2H3zM6 3h2v2H6zM0 6h2v2H0zM3 6h2v2H3zM6 6h2v2H6z" fill="#777" />
      </svg>
    </div>
  );
}

function Hint() {
  return (
    <>
      <div className="absolute inset-x-0 bottom-0 flex h-[18px] items-start gap-[3px] overflow-hidden bg-[#303030]/85 pl-[478px] text-white">
        <svg viewBox="0 0 16 16" className="mt-1 size-4 shrink-0" aria-hidden="true">
          <path d="M15 1L9 7M9 2v5h5M0 16l6-6M1 10h5v5" stroke="#fff" fill="none" />
        </svg>
        <p className="pt-1 leading-5 font-bold whitespace-nowrap">在此处添加剪力墙构件的其他特殊设计的钢筋。</p>
      </div>
      <div className="absolute bottom-[23px] left-[466px] flex h-[29px] w-[278px] items-center justify-between rounded-[3px] bg-[#0091ff] pr-5 pl-[7px] whitespace-nowrap text-white">
        点击图标可调节提示信息位置~
        <button className="text-[#7fc8ff]">不再提示</button>
        <svg viewBox="0 0 12 5" className="absolute top-full left-3.5 h-[5px] w-3" aria-hidden="true">
          <path d="M0 0h12L6 5z" fill="#0091ff" />
        </svg>
      </div>
    </>
  );
}

export default function App() {
  return (
    <div className="flex h-screen flex-col overflow-hidden bg-[#f5f5f5] font-['Noto_Sans','Noto_Sans_CJK_SC',sans-serif] text-xs text-[#333]">
      <MenuTabs />
      <Ribbon />
      <OptionsBar />
      <div className="flex min-h-0 flex-1">
        <NavPanel />
        <div className="ml-1 flex w-[264px] shrink-0 flex-col">
          <ComponentPanel />
          <PropertyPanel />
        </div>
        <div className="flex w-1 shrink-0 flex-col bg-white pt-[368px]">
          <button aria-label="收起面板" className="flex h-[100px] w-full items-center bg-[#5d6673]">
            <svg viewBox="0 0 4 6" className="h-1.5 w-1"><path d="M4 0v6L0 3z" fill="#ddd" /></svg>
          </button>
        </div>
        <main className="relative min-w-0 flex-1 overflow-hidden bg-black">
          <Cad />
          <RebarDialog />
          <Hint />
        </main>
      </div>
    </div>
  );
}
